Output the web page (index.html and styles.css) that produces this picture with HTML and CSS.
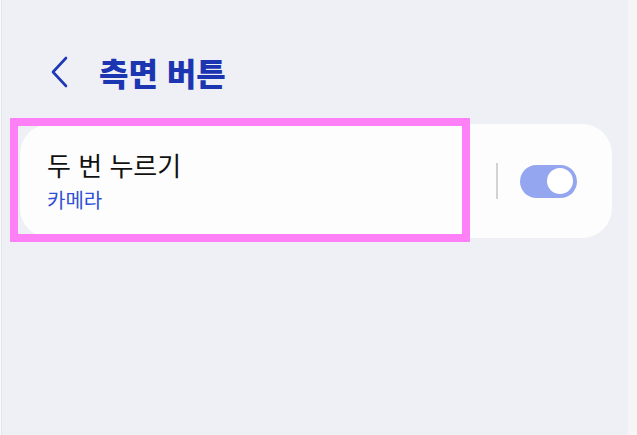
FILE: index.html
```html
<!DOCTYPE html>
<html lang="ko">
<head>
  <meta charset="UTF-8" />
  <title>측면 버튼</title>
  <meta name="viewport" content="width=device-width, initial-scale=1" />
  <link rel="stylesheet" href="styles.css">
</head>
<body>
  <div class="edge"></div>
  <div class="screen">
    <div class="header">
      <svg class="back" width="20" height="32" viewBox="0 0 20 32">
        <path d="M16 2 L3 16 L16 30" fill="none" stroke="#1c38b4" stroke-width="2.6" stroke-linecap="round" stroke-linejoin="round"/>
      </svg>
      <h1>측면 버튼</h1>
    </div>

    <div class="card">
      <div class="item highlighted">
        <div class="item-title">두 번 누르기</div>
        <div class="item-sub">카메라</div>
      </div>
      <div class="divider"></div>
      <div class="toggle on"><span class="knob"></span></div>
    </div>
  </div>
  <div class="side"></div>
</body>
</html>
```

FILE: styles.css
```css
body {
  margin: 0;
  height: 435px;
  display: flex;
  background: #f6f6f6;
  font-family: "Noto Sans CJK KR", "Noto Sans", sans-serif;
  overflow: hidden;
}
.edge {
  width: 2px;
  background: #fafafc;
  border-right: 1px solid #e4e5ea;
  box-sizing: border-box;
}
.side {
  flex: 1;
  background: #f6f6f6;
}
.screen {
  width: 626px;
  background: #eff0f5;
}
.header {
  display: flex;
  align-items: center;
  height: 40px;
  margin-top: 52px;
  padding-left: 48px;
}
.back {
  display: block;
}
.header h1 {
  margin: 0 0 0 29px;
  font-size: 32px;
  font-weight: 900;
  color: #1c36b2;
  line-height: 40px;
}
.card {
  margin: 32px 0 0 18px;
  width: 592px;
  height: 114px;
  border-radius: 30px;
  background: #fdfdfd;
  display: flex;
  align-items: center;
}
.item {
  position: relative;
  width: 442px;
  height: 100%;
  box-sizing: border-box;
  padding-left: 27px;
  display: flex;
  flex-direction: column;
  justify-content: center;
}
/* pink selection frame */
.highlighted::after {
  content: "";
  position: absolute;
  left: -10px;
  right: -8px;
  top: -6px;
  bottom: -4px;
  border: 8px solid #fd80f6;
}
.item-title {
  font-size: 26px;
  color: #111;
  line-height: 32px;
}
.item-sub {
  font-size: 20px;
  color: #2f50d6;
  line-height: 26px;
  margin-top: 6px;
}
.divider {
  width: 2px;
  height: 36px;
  background: #d2d3d6;
  margin-left: 34px;
}
.toggle {
  width: 57px;
  height: 33px;
  border-radius: 17px;
  background: #94a6f0;
  margin-left: 22px;
  display: flex;
  align-items: center;
  justify-content: flex-end;
  padding-right: 4px;
  box-sizing: border-box;
}
.knob {
  width: 26px;
  height: 26px;
  border-radius: 50%;
  background: #fff;
}
```
